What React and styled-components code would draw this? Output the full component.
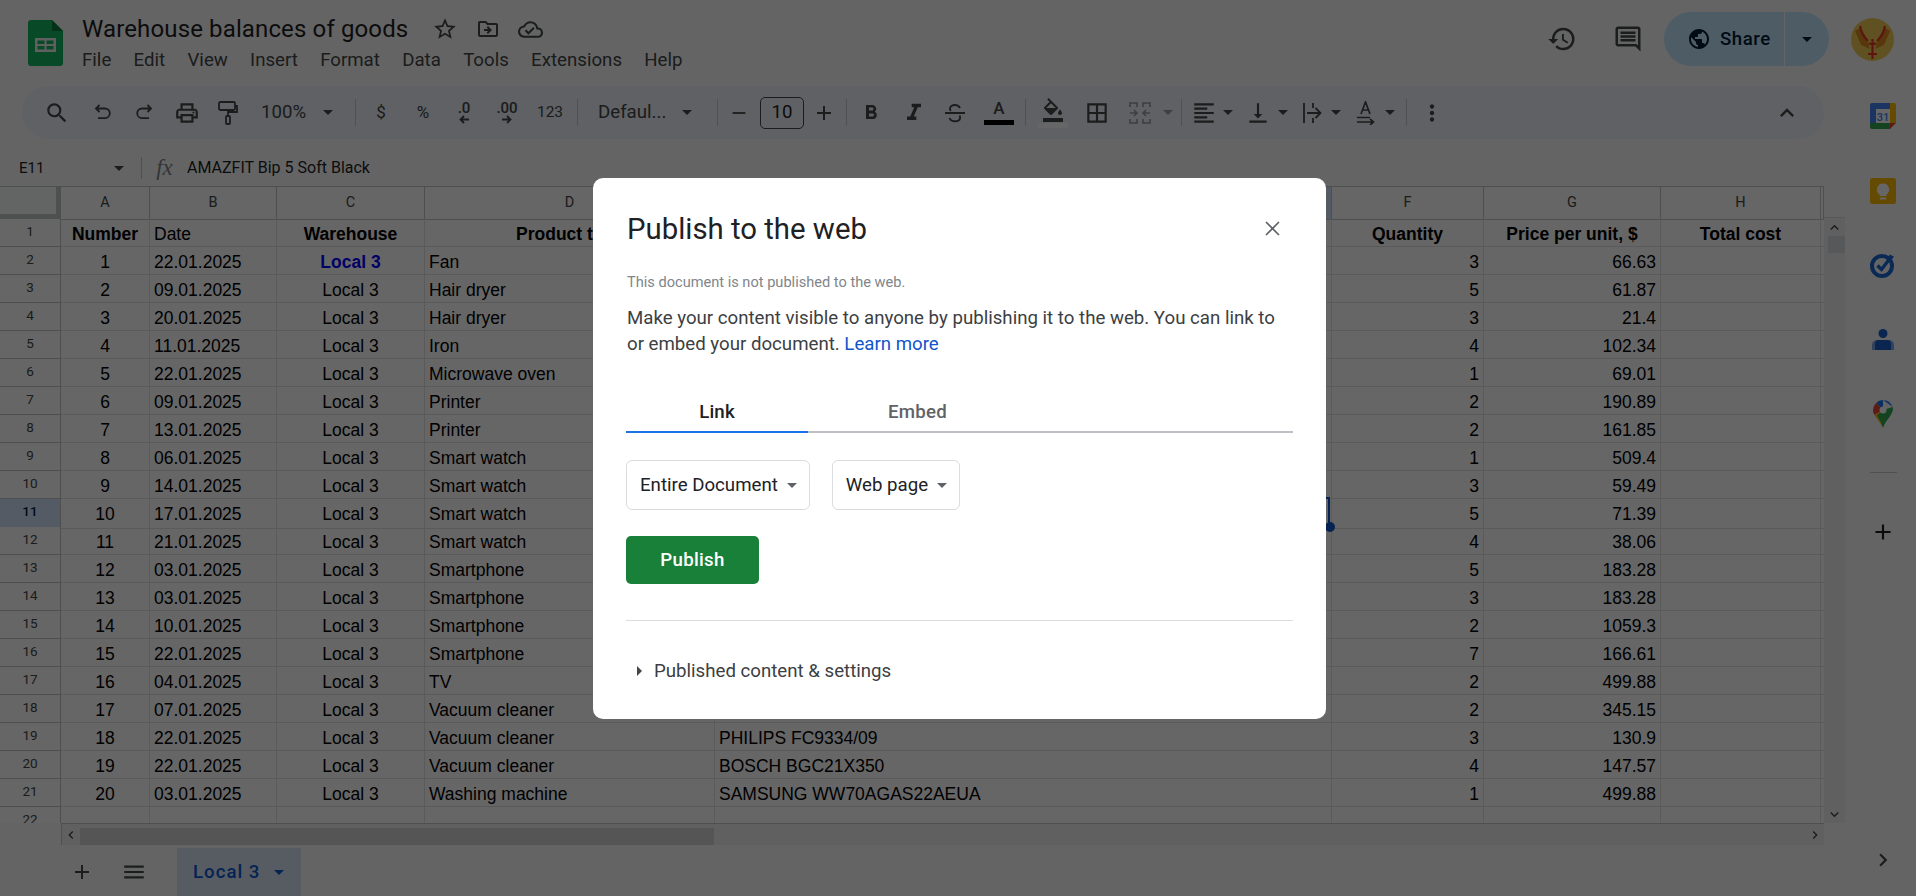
import React from 'react';
import styled, { createGlobalStyle } from 'styled-components';
import {
  MdSearch, MdOutlinePrint, MdFormatBold, MdFormatItalic,
  MdOutlineFormatColorFill, MdBorderAll, MdFormatAlignLeft,
  MdVerticalAlignBottom, MdMoreVert, MdKeyboardArrowUp, MdKeyboardArrowDown, MdHistory,
  MdOutlineComment, MdPublic, MdAdd, MdMenu, MdChevronRight, MdChevronLeft,
  MdStarBorder, MdOutlineDriveFileMove, MdOutlineCloudDone, MdRemove,
} from 'react-icons/md';

const GlobalStyle = createGlobalStyle`
  html, body { margin: 0; padding: 0; height: 100%; overflow: hidden; }
  body { font-family: Roboto, "Liberation Sans", sans-serif; color: #1f1f1f; background: #f9fbfd; }
  * { box-sizing: border-box; }
  button { font: inherit; border: 0; background: none; padding: 0; color: inherit; }
`;

const Page = styled.div`
  position: relative;
  width: 1916px;
  height: 896px;
  overflow: hidden;
  display: flex;
  flex-direction: column;
  background: #f9fbfd;
`;

/* top header */
const TopBar = styled.header`
  height: 86px;
  flex: none;
  display: flex;
  align-items: flex-start;
  padding-left: 28px;
`;

const LogoBox = styled.div`
  margin-top: 20px;
  width: 35px;
  height: 46px;
`;

const TitleBlock = styled.div`
  margin-left: 19px;
  padding-top: 17px;
`;

const TitleRow = styled.div`
  display: flex;
  align-items: center;
  height: 24px;
`;

const DocTitle = styled.div`
  font-size: 24px;
  line-height: 24px;
  letter-spacing: 0.13px;
  color: #1f1f1f;
  width: 350px;
`;

const TitleIcon = styled.span`
  display: flex;
  width: 43px;
  justify-content: center;
  color: #444746;
  margin-left: -9px;
  margin-right: 9px;
`;

const Menu = styled.nav`
  display: flex;
  gap: 22.3px;
  margin-top: 8px;
  font-size: 18.67px;
  line-height: 22px;
  color: #444746;
`;

const TopActions = styled.div`
  margin-left: auto;
  display: flex;
  align-items: center;
  height: 66px;
  padding-top: 12px;
  padding-right: 22px;
`;

const RoundIcon = styled.span`
  display: flex;
  width: 30px;
  justify-content: center;
  margin-right: ${(p) => p.$mr}px;
  color: #444746;
`;

const SharePill = styled.div`
  display: flex;
  width: 165px;
  height: 54px;
  border-radius: 27px;
  background: #c2e7ff;
  color: #001d35;
  overflow: hidden;
  margin-right: 22px;
`;

const ShareMain = styled.div`
  width: 121px;
  display: flex;
  align-items: center;
  gap: 9px;
  padding-left: 23px;
  border-right: 1px solid #f9fbfd;
  font-size: 18.67px;
  font-weight: 500;
  letter-spacing: 0.5px;
`;

const ShareDrop = styled.div`
  flex: 1;
  display: flex;
  align-items: center;
  justify-content: center;
`;

const Caret = styled.span`
  display: inline-block;
  width: 0;
  height: 0;
  border-left: 5px solid transparent;
  border-right: 5px solid transparent;
  border-top: 5px solid ${(p) => p.$color || 'currentColor'};
`;

const AvatarBox = styled.div`
  width: 43px;
  height: 43px;
`;

/* main area */
const Main = styled.div`
  flex: 1;
  display: flex;
  min-height: 0;
`;

const WorkColumn = styled.div`
  width: 1845px;
  display: flex;
  flex-direction: column;
`;

const Toolbar = styled.div`
  height: 53px;
  width: 1802px;
  flex: none;
  margin-left: 22px;
  border-radius: 27px;
  background: #edf2fa;
  display: flex;
  align-items: center;
  color: #444746;
  font-size: 17px;
`;

const Slot = styled.div`
  flex: none;
  width: ${(p) => p.$w}px;
  margin-left: ${(p) => p.$ml}px;
  display: flex;
  flex-direction: column;
  align-items: center;
  justify-content: center;
  line-height: 1;
  opacity: ${(p) => (p.$dim ? 0.5 : 1)};
`;

const ToolDivider = styled.div`
  width: 1px;
  height: 27px;
  background: #c7c7c7;
`;

const NumberFmt = styled.span`
  font-size: ${(p) => p.$size || 15}px;
  font-weight: ${(p) => p.$weight || 500};
  color: #444746;
`;

const SmallArrow = styled.svg`
  display: block;
  margin-top: -1px;
`;

const ZoomSelect = styled.div`
  display: flex;
  align-items: center;
  justify-content: space-between;
  width: 100%;
  font-size: 18.67px;
`;

const FontSizeBox = styled.div`
  width: 44px;
  height: 32px;
  border: 1px solid #444746;
  border-radius: 5px;
  display: flex;
  align-items: center;
  justify-content: center;
  font-size: 18.67px;
  color: #1f1f1f;
`;

const ColorBar = styled.div`
  width: ${(p) => p.$w}px;
  height: 5px;
  margin-top: 1px;
  background: ${(p) => p.$color};
`;

const TextColorA = styled.span`
  font-size: 17px;
  font-weight: 500;
  height: 19px;
  color: #444746;
`;

const FormulaBar = styled.div`
  height: 38px;
  margin-top: 10px;
  flex: none;
  display: flex;
  align-items: center;
  color: #444746;
`;

const NameBox = styled.div`
  width: 141px;
  padding-left: 19px;
  padding-right: 17px;
  display: flex;
  align-items: center;
  justify-content: space-between;
  font-size: 15px;
  color: #1f1f1f;
`;

const BarDivider = styled.div`
  width: 1px;
  height: 22px;
  background: #c7c7c7;
`;

const FxMark = styled.span`
  font-family: "Liberation Serif", serif;
  font-style: italic;
  font-size: 23px;
  color: #80868b;
  width: 45px;
  text-align: center;
`;

const FormulaText = styled.div`
  font-size: 16px;
  margin-top: -2px;
  color: #1f1f1f;
`;

/* sheet */
const SheetArea = styled.div`
  display: flex;
  height: 636px;
  flex: none;
`;

const Sheet = styled.div`
  width: 1824px;
  overflow: hidden;
  background: #fff;
  border-top: 1px solid #c4c7c5;
  margin-top: -1px;
  height: 637px;
`;

const Row = styled.div`
  display: grid;
  grid-template-columns: 61px 89px 127px 148px 290px 617px 152px 177px 160px 3px;
  height: ${(p) => p.$h || 28}px;
`;

const Cell = styled.div`
  position: relative;
  overflow: hidden;
  border-right: 1px solid #e1e1e1;
  border-bottom: 1px solid #e1e1e1;
  padding: 1px 4px 0;
  font-family: "Liberation Sans", Arial, sans-serif;
  font-size: 17.5px;
  line-height: 28px;
  white-space: nowrap;
  color: ${(p) => p.$color || '#000'};
  text-align: ${(p) => p.$align || 'left'};
  font-weight: ${(p) => (p.$bold ? 700 : 400)};
`;

const SelectedCell = styled(Cell)`
  overflow: visible;
  z-index: 1;
  &::before {
    content: '';
    position: absolute;
    top: -2px;
    left: -2px;
    right: 1px;
    bottom: 0;
    border: 2px solid #0b57d0;
  }
  &::after {
    content: '';
    position: absolute;
    right: -4px;
    bottom: -4px;
    width: 10px;
    height: 10px;
    border-radius: 50%;
    background: #0b57d0;
  }
`;

const RowHead = styled.div`
  border-right: 1px solid #c4c7c5;
  border-bottom: 1px solid #c4c7c5;
  font-size: 13.5px;
  line-height: 24px;
  text-align: center;
  color: ${(p) => (p.$active ? '#041e49' : '#444746')};
  font-weight: ${(p) => (p.$active ? 500 : 400)};
  background: ${(p) => (p.$active ? '#d3e3fd' : '#fff')};
`;

const ColHead = styled.div`
  border-right: 1px solid #c4c7c5;
  border-bottom: 1px solid #c4c7c5;
  font-size: 14.5px;
  line-height: 32px;
  text-align: center;
  color: #444746;
  background: ${(p) => (p.$active ? '#d3e3fd' : '#fff')};
`;

const Corner = styled.div`
  background: #f8f9fa;
  border-right: 5px solid #c4c7c5;
  border-bottom: 6px solid #c4c7c5;
`;

const VScroll = styled.div`
  width: 21px;
  display: flex;
  flex-direction: column;
  align-items: flex-end;
`;

const ScrollGap = styled.div`
  height: 30px;
  flex: none;
`;

const VTrack = styled.div`
  flex: 1;
  width: 100%;
  background: #f1f1f1;
  border-top: 1px solid #dadce0;
  display: flex;
  flex-direction: column;
  align-items: flex-end;
`;

const ScrollArrow = styled.div`
  width: 100%;
  height: ${(p) => p.$h}px;
  margin-top: ${(p) => (p.$end ? 'auto' : 0)};
  display: flex;
  align-items: center;
  justify-content: center;
  color: #444;
`;

const VThumb = styled.div`
  width: 17px;
  height: 17px;
  background: #dadce0;
`;

const HScroll = styled.div`
  height: 22px;
  flex: none;
  width: 1824px;
  padding-left: 61px;
  display: flex;
`;

const HTrack = styled.div`
  flex: 1;
  display: flex;
  background: #f1f1f1;
  border-left: 1px solid #c4c7c5;
  border-top: 1px solid #c4c7c5;
`;

const HArrow = styled.div`
  width: 18px;
  flex: none;
  margin-left: ${(p) => (p.$end ? 'auto' : 0)};
  display: flex;
  align-items: center;
  justify-content: center;
  color: #444;
`;

const HThumb = styled.div`
  width: 634px;
  height: 17px;
  margin-top: 4px;
  background: #d4d4d4;
`;

const TabBar = styled.div`
  flex: 1;
  display: flex;
  align-items: flex-end;
  padding-left: 69px;
  color: #444746;
`;

const TabIcon = styled.span`
  display: flex;
  width: 26px;
  height: 48px;
  align-items: center;
  justify-content: center;
  margin-right: ${(p) => p.$mr}px;
`;

const SheetTab = styled.div`
  width: 124px;
  height: 48px;
  background: #dae5f7;
  color: #0b57d0;
  display: flex;
  align-items: center;
  padding-left: 16px;
  gap: 14px;
  font-size: 18.67px;
  font-weight: 500;
  letter-spacing: 1px;
`;

/* right side panel */
const SidePanel = styled.aside`
  flex: 1;
  display: flex;
  flex-direction: column;
  align-items: center;
  padding: 16px 0 23px 5px;
`;

const SideIcon = styled.div`
  width: 28px;
  height: 28px;
  margin-bottom: ${(p) => (p.$mb === undefined ? 46.5 : p.$mb)}px;
  display: flex;
  align-items: center;
  justify-content: center;
  position: relative;
`;

const SideDivider = styled.div`
  width: 27px;
  height: 1px;
  background: #c7c7c7;
  margin-top: -2px;
  margin-bottom: 45px;
`;

const SideChevron = styled.div`
  margin-top: auto;
  display: flex;
  color: #444746;
`;

/* dialog */
const Backdrop = styled.div`
  position: absolute;
  inset: 0;
  z-index: 10;
  background: rgba(0, 0, 0, 0.6);
  display: flex;
  align-items: center;
  justify-content: center;
`;

const Dialog = styled.div`
  width: 733px;
  height: 541px;
  margin-left: 3px;
  margin-top: 1px;
  padding: 35px 33px 0 34px;
  background: #fff;
  border-radius: 10px;
`;

const DialogHead = styled.div`
  display: flex;
  align-items: center;
  justify-content: space-between;
  height: 32px;
`;

const DialogTitle = styled.h2`
  margin: 0;
  font-size: 29.33px;
  font-weight: 400;
  line-height: 32px;
  color: #202124;
`;

const CloseButton = styled.button`
  display: flex;
  margin-right: 13.5px;
  margin-top: -2px;
`;

const StatusText = styled.div`
  margin-top: 28px;
  font-size: 14.6px;
  line-height: 18px;
  color: #80868b;
`;

const Paragraph = styled.p`
  margin: 15px 0 0;
  font-size: 18.67px;
  line-height: 25.7px;
  color: #3c4043;
`;

const LearnMore = styled.a`
  color: #1155cc;
`;

const Tabs = styled.div`
  display: flex;
  margin: 33px 0 0 -1px;
  height: 43px;
  border-bottom: 2px solid #bdc1c6;
`;

const DialogTab = styled.div`
  width: ${(p) => p.$w}px;
  height: 43px;
  text-align: center;
  line-height: 44px;
  font-size: 18.67px;
  font-weight: 500;
  letter-spacing: 0.2px;
  color: ${(p) => (p.$active ? '#202124' : '#5f6368')};
  border-bottom: 2px solid ${(p) => (p.$active ? '#1a73e8' : 'transparent')};
`;

const SelectRow = styled.div`
  display: flex;
  gap: 22px;
  margin: 27px 0 0 -1px;
`;

const SelectBox = styled.div`
  height: 50px;
  padding: 0 12px 0 13px;
  display: flex;
  align-items: center;
  gap: 9px;
  border: 1px solid #dadce0;
  border-radius: 6px;
  font-size: 18.67px;
  color: #202124;
`;

const PublishButton = styled.button`
  display: block;
  margin: 26px 0 0 -1px;
  width: 133px;
  height: 48px;
  background: #188038;
  color: #fff;
  border-radius: 5px;
  font-size: 18.67px;
  font-weight: 500;
  letter-spacing: 0.3px;
`;

const Rule = styled.hr`
  margin: 36px 0 0 -1px;
  border: 0;
  border-top: 1px solid #dadce0;
`;

const Disclosure = styled.div`
  display: flex;
  align-items: center;
  margin-top: 37px;
  height: 26px;
  padding-left: 10px;
  gap: 12px;
  font-size: 18.67px;
  color: #3c4043;
`;

const RightTriangle = styled.span`
  width: 0;
  height: 0;
  border-top: 5px solid transparent;
  border-bottom: 5px solid transparent;
  border-left: 5px solid #444746;
`;

const rows = [
  ['22.01.2025', 'Fan', '', 3, 66.63],
  ['09.01.2025', 'Hair dryer', '', 5, 61.87],
  ['20.01.2025', 'Hair dryer', '', 3, 21.4],
  ['11.01.2025', 'Iron', '', 4, 102.34],
  ['22.01.2025', 'Microwave oven', '', 1, 69.01],
  ['09.01.2025', 'Printer', '', 2, 190.89],
  ['13.01.2025', 'Printer', '', 2, 161.85],
  ['06.01.2025', 'Smart watch', '', 1, 509.4],
  ['14.01.2025', 'Smart watch', '', 3, 59.49],
  ['17.01.2025', 'Smart watch', 'AMAZFIT Bip 5 Soft Black', 5, 71.39],
  ['21.01.2025', 'Smart watch', '', 4, 38.06],
  ['03.01.2025', 'Smartphone', '', 5, 183.28],
  ['03.01.2025', 'Smartphone', '', 3, 183.28],
  ['10.01.2025', 'Smartphone', '', 2, 1059.3],
  ['22.01.2025', 'Smartphone', '', 7, 166.61],
  ['04.01.2025', 'TV', '', 2, 499.88],
  ['07.01.2025', 'Vacuum cleaner', '', 2, 345.15],
  ['22.01.2025', 'Vacuum cleaner', 'PHILIPS FC9334/09', 3, 130.9],
  ['22.01.2025', 'Vacuum cleaner', 'BOSCH BGC21X350', 4, 147.57],
  ['03.01.2025', 'Washing machine', 'SAMSUNG WW70AGAS22AEUA', 1, 499.88],
];

const menuItems = ['File', 'Edit', 'View', 'Insert', 'Format', 'Data', 'Tools', 'Extensions', 'Help'];
const columns = ['A', 'B', 'C', 'D', 'E', 'F', 'G', 'H', ''];

const SheetsLogo = () => (
  <svg width="35" height="46" viewBox="0 0 35 46">
    <path d="M3 0h21l11 11v32a3 3 0 0 1-3 3H3a3 3 0 0 1-3-3V3a3 3 0 0 1 3-3z" fill="#16b862" />
    <path d="M24 0l11 11H24z" fill="#0e7a40" />
    <path d="M7 18h21v14H7z" fill="#f1f1f1" />
    <path d="M9.5 20.5h7v3.5h-7zM18.5 20.5h7v3.5h-7zM9.5 26h7v3.5h-7zM18.5 26h7v3.5h-7z" fill="#16b862" />
  </svg>
);

const Avatar = () => (
  <svg width="43" height="43" viewBox="0 0 43 43">
    <circle cx="21.5" cy="21.5" r="21.5" fill="#efcb55" />
    <path d="M4 13l5-3 8 15 2 6-9-4zM39 13l-5-3-8 15-2 6 9-4z" fill="#d98a1c" />
    <path d="M9 8c1 6 4 11 8 15M34 8c-1 6-4 11-8 15M21.5 21v20M17 36h9M18 25c2 2 5 2 7 0" fill="none" stroke="#e8352a" strokeWidth="2.2" />
  </svg>
);

const UndoIcon = () => (
  <svg width="17" height="17" viewBox="0 0 17 17" fill="none" stroke="#444746" strokeWidth="1.8">
    <path d="M5.5 1L2 4.5 5.5 8M2 4.5h9a4.8 4.8 0 0 1 0 9.6H4" />
  </svg>
);

const RedoIcon = () => (
  <svg width="17" height="17" viewBox="0 0 17 17" fill="none" stroke="#444746" strokeWidth="1.8">
    <path d="M11.5 1L15 4.5 11.5 8M15 4.5H6a4.8 4.8 0 0 0 0 9.6h7" />
  </svg>
);

const PaintIcon = () => (
  <svg width="20" height="24" viewBox="0 0 20 24" fill="none" stroke="#444746" strokeWidth="1.8">
    <rect x="1" y="1" width="16" height="8" rx="1.5" />
    <path d="M17 5h2v6H10v4" />
    <rect x="8" y="15" width="4" height="8" rx="1" />
  </svg>
);

const StrikeIcon = () => (
  <svg width="22" height="22" viewBox="0 0 22 22" fill="none" stroke="#444746" strokeWidth="1.9">
    <path d="M16 6c-1-2-3-3-5-3-3 0-5 1.700-5 3.800 0 .8.300 1.500.8 2.200M1 11h20M15.500 13.500c.4.600.6 1.200.6 2 0 2.200-2.100 3.800-5.100 3.800-2.600 0-4.700-1.100-5.500-3.300" />
  </svg>
);

const CloseGlyph = () => (
  <svg width="15" height="15" viewBox="0 0 15 15" fill="none" stroke="#5f6368" strokeWidth="1.7">
    <path d="M1 1l13 13M14 1L1 14" />
  </svg>
);

const DecreaseDecimal = () => (
  <>
    <NumberFmt>.0</NumberFmt>
    <SmallArrow width="12" height="9" viewBox="0 0 12 9"><path d="M11 4.5H3M6 1L2.5 4.5 6 8" fill="none" stroke="#444746" strokeWidth="1.8" /></SmallArrow>
  </>
);

const IncreaseDecimal = () => (
  <>
    <NumberFmt>.00</NumberFmt>
    <SmallArrow width="12" height="9" viewBox="0 0 12 9"><path d="M1 4.5h8M6 1l3.5 3.5L6 8" fill="none" stroke="#444746" strokeWidth="1.8" /></SmallArrow>
  </>
);

const MergeIcon = () => (
  <svg width="22" height="22" viewBox="0 0 22 22" fill="none" stroke="#444746" strokeWidth="1.6">
    <path d="M1 5V1h7v4M1 17v4h7v-4M21 5V1h-7v4M21 17v4h-7v-4M1 11h7M5 8l3 3-3 3M21 11h-7M17 8l-3 3 3 3" />
  </svg>
);

const WrapIcon = () => (
  <svg width="20" height="22" viewBox="0 0 20 22" fill="none" stroke="#444746" strokeWidth="1.8">
    <path d="M2 1v20M11 1v5M11 16v5M5 11h13M13.5 6l5 5-5 5" />
  </svg>
);

const RotateIcon = () => (
  <svg width="20" height="24" viewBox="0 0 20 24" fill="none" stroke="#444746" strokeWidth="1.7">
    <path d="M5 13L9.5 1 14 13M6.500 9h6M1 16.500h13M1 21h16M14 18l3.500 3L14 24" />
  </svg>
);

const CalendarIcon = () => (
  <svg width="26" height="26" viewBox="0 0 26 26">
    <path d="M2 0h20v6H6v14H0V2a2 2 0 0 1 2-2z" fill="#4285f4" />
    <path d="M20 0h4a2 2 0 0 1 2 2v18h-6z" fill="#fbbc04" />
    <path d="M0 20h20v6H2a2 2 0 0 1-2-2z" fill="#34a853" />
    <path d="M20 20h6l-6 6z" fill="#ea4335" />
    <path d="M6 6h14v14H6z" fill="#fff" />
    <text x="13" y="17.5" textAnchor="middle" fontFamily="Roboto, sans-serif" fontSize="11" fontWeight="500" fill="#4285f4">31</text>
  </svg>
);

const KeepIcon = () => (
  <svg width="26" height="26" viewBox="0 0 26 26">
    <rect width="26" height="26" rx="2.5" fill="#fbbc04" />
    <path d="M13 5.500a6 6 0 0 0-3.400 11v1.500h6.800v-1.500A6 6 0 0 0 13 5.500zM10 19.500h6v2h-6z" fill="#fff" />
  </svg>
);

const TasksIcon = () => (
  <svg width="26" height="26" viewBox="0 0 26 26" fill="none">
    <circle cx="12" cy="14" r="10" stroke="#1967d2" strokeWidth="4" />
    <path d="M7.5 13.500l4 4L21 5" stroke="#1967d2" strokeWidth="3.4" />
    <path d="M19.500 2.500l4.500 2-3 4-3-2z" fill="#1967d2" />
  </svg>
);

const ContactsIcon = () => (
  <svg width="26" height="26" viewBox="0 0 26 26">
    <circle cx="13" cy="6.500" r="4.500" fill="#1a5fc8" />
    <path d="M7 13h12a5 5 0 0 1 5 5v5H2v-5a5 5 0 0 1 5-5z" fill="#7aa5e8" />
    <path d="M9 13h8a4 4 0 0 1 4 4v6H5v-6a4 4 0 0 1 4-4z" fill="#1a5fc8" />
  </svg>
);

const MapsIcon = () => (
  <svg width="24" height="28" viewBox="0 0 24 28">
    <path d="M12 0a9.700 9.700 0 0 0-7 3l7 7z" fill="#1a73e8" />
    <path d="M5 3a10 10 0 0 0-3 7c0 2 .5 3.500 1.500 5L12 10z" fill="#ea4335" />
    <path d="M3.500 15c2 3.500 5.500 7 8.500 13V10z" fill="#fbbc04" />
    <path d="M12 10L6 15.500c2 3 4.500 7 6 12.500 2-7 8-11 10-18a10 10 0 0 0-.5-3z" fill="#34a853" />
    <path d="M12 0l9.500 7A10 10 0 0 0 12 0z" fill="#4285f4" />
    <circle cx="12" cy="10" r="3.500" fill="#fff" />
  </svg>
);

// x is the centre of the item in the toolbar
const toolItems = [
  { x: 57, w: 26, el: <MdSearch size={26} /> },
  { x: 102, w: 17, el: <UndoIcon /> },
  { x: 144, w: 17, el: <RedoIcon /> },
  { x: 187, w: 26, el: <MdOutlinePrint size={26} /> },
  { x: 228, w: 20, el: <PaintIcon /> },
  { x: 297, w: 72, el: <ZoomSelect>100%<Caret /></ZoomSelect> },
  { x: 355, w: 1, el: <ToolDivider /> },
  { x: 381, w: 20, el: <NumberFmt $size={17} $weight={400}>$</NumberFmt> },
  { x: 423, w: 24, el: <NumberFmt $size={17} $weight={400}>%</NumberFmt> },
  { x: 464, w: 24, el: <DecreaseDecimal /> },
  { x: 507, w: 28, el: <IncreaseDecimal /> },
  { x: 550, w: 30, el: <NumberFmt $size={15.5} $weight={400}>123</NumberFmt> },
  { x: 577, w: 1, el: <ToolDivider /> },
  { x: 645, w: 94, el: <ZoomSelect>Defaul...<Caret /></ZoomSelect> },
  { x: 717, w: 1, el: <ToolDivider /> },
  { x: 739, w: 22, el: <MdRemove size={22} /> },
  { x: 782, w: 44, el: <FontSizeBox>10</FontSizeBox> },
  { x: 824, w: 24, el: <MdAdd size={24} /> },
  { x: 846, w: 1, el: <ToolDivider /> },
  { x: 871, w: 24, el: <MdFormatBold size={24} /> },
  { x: 914, w: 28, el: <MdFormatItalic size={28} /> },
  { x: 955, w: 22, el: <StrikeIcon /> },
  { x: 999, w: 32, el: <><TextColorA>A</TextColorA><ColorBar $w={30} $color="#000" /></> },
  { x: 1025, w: 1, el: <ToolDivider /> },
  { x: 1053, w: 32, el: <><MdOutlineFormatColorFill size={24} /><ColorBar $w={30} $color="#fff" /></> },
  { x: 1097, w: 26, el: <MdBorderAll size={26} /> },
  { x: 1140, w: 22, dim: true, el: <MergeIcon /> },
  { x: 1168, w: 10, dim: true, el: <Caret /> },
  { x: 1181, w: 1, el: <ToolDivider /> },
  { x: 1204, w: 26, el: <MdFormatAlignLeft size={26} /> },
  { x: 1228, w: 10, el: <Caret /> },
  { x: 1258, w: 26, el: <MdVerticalAlignBottom size={26} /> },
  { x: 1283, w: 10, el: <Caret /> },
  { x: 1312, w: 20, el: <WrapIcon /> },
  { x: 1336, w: 10, el: <Caret /> },
  { x: 1366, w: 20, el: <RotateIcon /> },
  { x: 1390, w: 10, el: <Caret /> },
  { x: 1406, w: 1, el: <ToolDivider /> },
  { x: 1432, w: 26, el: <MdMoreVert size={26} /> },
  { x: 1787, w: 28, el: <MdKeyboardArrowUp size={28} /> },
];

const ToolbarRow = () => {
  let right = 22;
  return (
    <Toolbar>
      {toolItems.map((item) => {
        const left = item.x - item.w / 2;
        const ml = left - right;
        right = left + item.w;
        return <Slot key={item.x} $w={item.w} $ml={ml} $dim={item.dim}>{item.el}</Slot>;
      })}
    </Toolbar>
  );
};

const SheetGrid = () => (
  <Sheet>
    <Row $h={32}>
      <Corner />
      {columns.map((c, i) => <ColHead key={i} $active={c === 'E'}>{c}</ColHead>)}
    </Row>
    <Row>
      <RowHead>1</RowHead>
      <Cell $align="center" $bold>Number</Cell>
      <Cell>Date</Cell>
      <Cell $align="center" $bold>Warehouse</Cell>
      <Cell $align="center" $bold>Product type</Cell>
      <Cell />
      <Cell $align="center" $bold>Quantity</Cell>
      <Cell $align="center" $bold>Price per unit, $</Cell>
      <Cell $align="center" $bold>Total cost</Cell>
      <Cell />
    </Row>
    {rows.map((r, i) => {
      const active = i === 9;
      const ECell = active ? SelectedCell : Cell;
      return (
        <Row key={i}>
          <RowHead $active={active}>{i + 2}</RowHead>
          <Cell $align="center">{i + 1}</Cell>
          <Cell>{r[0]}</Cell>
          {i === 0
            ? <Cell $align="center" $bold $color="#0000ff">Local 3</Cell>
            : <Cell $align="center">Local 3</Cell>}
          <Cell>{r[1]}</Cell>
          <ECell>{r[2]}</ECell>
          <Cell $align="right">{r[3]}</Cell>
          <Cell $align="right">{r[4]}</Cell>
          <Cell />
          <Cell />
        </Row>
      );
    })}
    <Row>
      <RowHead>22</RowHead>
      {columns.map((c, i) => <Cell key={i} />)}
    </Row>
  </Sheet>
);

const PublishDialog = () => (
  <Dialog>
    <DialogHead>
      <DialogTitle>Publish to the web</DialogTitle>
      <CloseButton><CloseGlyph /></CloseButton>
    </DialogHead>
    <StatusText>This document is not published to the web.</StatusText>
    <Paragraph>
      Make your content visible to anyone by publishing it to the web. You can link to
      <br />
      or embed your document. <LearnMore>Learn more</LearnMore>
    </Paragraph>
    <Tabs>
      <DialogTab $w={182} $active>Link</DialogTab>
      <DialogTab $w={219}>Embed</DialogTab>
    </Tabs>
    <SelectRow>
      <SelectBox>Entire Document <Caret $color="#5f6368" /></SelectBox>
      <SelectBox>Web page <Caret $color="#5f6368" /></SelectBox>
    </SelectRow>
    <PublishButton>Publish</PublishButton>
    <Rule />
    <Disclosure>
      <RightTriangle />
      Published content &amp; settings
    </Disclosure>
  </Dialog>
);

const App = () => (
  <Page>
    <GlobalStyle />
    <TopBar>
      <LogoBox><SheetsLogo /></LogoBox>
      <TitleBlock>
        <TitleRow>
          <DocTitle>Warehouse balances of goods</DocTitle>
          <TitleIcon><MdStarBorder size={26} /></TitleIcon>
          <TitleIcon><MdOutlineDriveFileMove size={24} /></TitleIcon>
          <TitleIcon><MdOutlineCloudDone size={25} /></TitleIcon>
        </TitleRow>
        <Menu>
          {menuItems.map((m) => <span key={m}>{m}</span>)}
        </Menu>
      </TitleBlock>
      <TopActions>
        <RoundIcon $mr={36}><MdHistory size={32} /></RoundIcon>
        <RoundIcon $mr={21}><MdOutlineComment size={32} /></RoundIcon>
        <SharePill>
          <ShareMain><MdPublic size={24} />Share</ShareMain>
          <ShareDrop><Caret /></ShareDrop>
        </SharePill>
        <AvatarBox><Avatar /></AvatarBox>
      </TopActions>
    </TopBar>
    <Main>
      <WorkColumn>
        <ToolbarRow />
        <FormulaBar>
          <NameBox>E11<Caret $color="#444746" /></NameBox>
          <BarDivider />
          <FxMark>fx</FxMark>
          <FormulaText>AMAZFIT Bip 5 Soft Black</FormulaText>
        </FormulaBar>
        <SheetArea>
          <SheetGrid />
          <VScroll>
            <ScrollGap />
            <VTrack>
              <ScrollArrow $h={18}><MdKeyboardArrowUp size={17} /></ScrollArrow>
              <VThumb />
              <ScrollArrow $h={18} $end><MdKeyboardArrowDown size={17} /></ScrollArrow>
            </VTrack>
          </VScroll>
        </SheetArea>
        <HScroll>
          <HTrack>
            <HArrow><MdChevronLeft size={16} /></HArrow>
            <HThumb />
            <HArrow $end><MdChevronRight size={16} /></HArrow>
          </HTrack>
        </HScroll>
        <TabBar>
          <TabIcon $mr={26}><MdAdd size={24} /></TabIcon>
          <TabIcon $mr={30}><MdMenu size={26} /></TabIcon>
          <SheetTab>Local 3<Caret $color="#0b57d0" /></SheetTab>
        </TabBar>
      </WorkColumn>
      <SidePanel>
        <SideIcon><CalendarIcon /></SideIcon>
        <SideIcon><KeepIcon /></SideIcon>
        <SideIcon><TasksIcon /></SideIcon>
        <SideIcon><ContactsIcon /></SideIcon>
        <SideIcon $mb={46}><MapsIcon /></SideIcon>
        <SideDivider />
        <SideIcon $mb={0}><MdAdd size={26} /></SideIcon>
        <SideChevron><MdChevronRight size={26} /></SideChevron>
      </SidePanel>
    </Main>
    <Backdrop>
      <PublishDialog />
    </Backdrop>
  </Page>
);

export default App;
